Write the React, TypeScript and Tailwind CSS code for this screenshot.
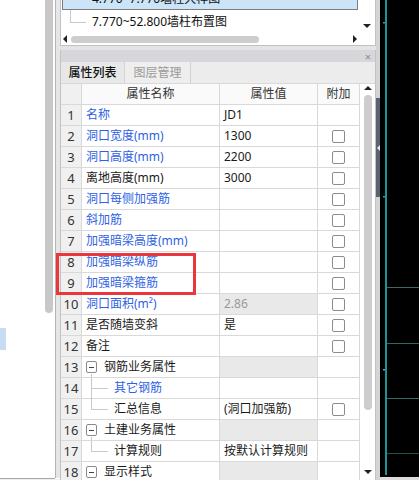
import React from "react";

type Row = {
  n: number;
  name: string;
  blue?: boolean;
  val?: string;
  valMuted?: boolean;
  cb?: boolean;
  valGray?: boolean;
  kind?: "exp" | "child" | "childLast";
};

const rows: Row[] = [
  { n: 1, name: "名称", blue: true, val: "JD1" },
  { n: 2, name: "洞口宽度(mm)", blue: true, val: "1300", cb: true },
  { n: 3, name: "洞口高度(mm)", blue: true, val: "2200", cb: true },
  { n: 4, name: "离地高度(mm)", val: "3000", cb: true },
  { n: 5, name: "洞口每侧加强筋", blue: true, cb: true },
  { n: 6, name: "斜加筋", blue: true, cb: true },
  { n: 7, name: "加强暗梁高度(mm)", blue: true, cb: true },
  { n: 8, name: "加强暗梁纵筋", blue: true, cb: true },
  { n: 9, name: "加强暗梁箍筋", blue: true, cb: true },
  { n: 10, name: "洞口面积(m²)", blue: true, val: "2.86", valMuted: true, valGray: true, cb: true },
  { n: 11, name: "是否随墙变斜", val: "是", cb: true },
  { n: 12, name: "备注", cb: true },
  { n: 13, name: "钢筋业务属性", kind: "exp", valGray: true },
  { n: 14, name: "其它钢筋", blue: true, kind: "child" },
  { n: 15, name: "汇总信息", kind: "childLast", val: "(洞口加强筋)", cb: true },
  { n: 16, name: "土建业务属性", kind: "exp", valGray: true },
  { n: 17, name: "计算规则", kind: "childLast", val: "按默认计算规则" },
  { n: 18, name: "显示样式", kind: "exp", valGray: true },
];

function Checkbox() {
  return <span className="block w-[13px] h-[13px] rounded-[2px] border border-[#8c8c8c] bg-white" />;
}

function NameCell({ r }: { r: Row }) {
  const color = r.blue ? "text-[#2f5fe3]" : "text-[#1a1a1a]";
  if (r.kind === "exp") {
    return (
      <div className="relative w-[138px] h-full border-r border-[#d9d9d9] flex items-center pl-[4px]">
        <span className="flex items-center justify-center w-[11px] h-[12px] border border-[#8a8a8a] rounded-[2px] bg-white">
          <span className="block w-[5px] h-px bg-[#444]" />
        </span>
        {r.n !== 18 && <span className="absolute left-[9px] top-[17px] bottom-0 w-px bg-[#c8c8c8]" />}
        <span className={`ml-[7px] ${color}`}>{r.name}</span>
      </div>
    );
  }
  if (r.kind === "child" || r.kind === "childLast") {
    return (
      <div className="relative w-[138px] h-full border-r border-[#d9d9d9] flex items-center pl-[32px]">
        <span
          className={`absolute left-[9px] top-0 w-px bg-[#c8c8c8] ${r.kind === "child" ? "h-[21px]" : "h-[10px]"}`}
        />
        <span className="absolute left-[9px] top-[10px] w-[17px] h-px bg-[#c8c8c8]" />
        <span className={color}>{r.name}</span>
      </div>
    );
  }
  return (
    <div className="w-[138px] h-full border-r border-[#d9d9d9] flex items-center pl-[4px]">
      <span className={color}>{r.name}</span>
    </div>
  );
}

function TableRow({ r }: { r: Row }) {
  return (
    <div className="flex h-[21px] border-b border-[#d9d9d9] bg-white">
      <div className="w-[21px] h-full border-r border-[#d9d9d9] bg-[#f0f0f0] flex items-center justify-center text-[13px] text-[#333]">
        {r.n}
      </div>
      <NameCell r={r} />
      <div
        className={`w-[98px] h-full border-r border-[#d9d9d9] flex items-center pl-[4px] ${
          r.valGray ? "bg-[#e9e9e9]" : "bg-white"
        } ${r.valMuted ? "text-[#9a9a9a]" : "text-[#1a1a1a]"}`}
      >
        {r.val}
      </div>
      <div className="w-[41px] h-full flex items-center justify-center">{r.cb && <Checkbox />}</div>
    </div>
  );
}

export default function App() {
  return (
    <div
      className="relative flex w-[419px] h-[480px] overflow-hidden bg-white text-[12px] leading-none"
      style={{ fontFamily: '"Noto Sans", "Noto Sans CJK SC", sans-serif' }}
    >
      {/* left strip */}
      <div className="flex flex-col w-[60px] h-full">
        <div className="flex h-[478px]">
          <div className="w-[45px] h-full bg-white pt-[328px]">
            <div className="w-[6px] h-[22px] bg-[#c9dbf0]" />
          </div>
          <div className="w-[8px] h-full bg-white">
            <div className="w-full h-[313px] rounded-b-[4px] bg-[#c8c8c8]" />
          </div>
          <div className="w-[2px] h-full bg-white" />
          <div className="w-px h-full bg-[#b4b4b4]" />
          <div className="w-[4px] h-full bg-[#e6e6e6]" />
        </div>
        <div className="h-px w-[55px] bg-[#a8a8a8]" />
        <div className="h-px w-full bg-[#efefef]" />
      </div>

      {/* main panel */}
      <div className="flex flex-col w-[316px] h-full bg-[#e6e6e6]">
        {/* tree panel */}
        <div className="flex h-[46px] border-l border-r border-b border-[#c2c2c2] bg-white">
          <div className="flex flex-col w-[297px] overflow-hidden">
            <div className="-mt-[12px] ml-px h-[22px] shrink-0 bg-[#cce4f7] border border-[#7d7d7d] flex items-center pl-[29px] text-[#111]">
              4.770~7.770墙柱大样图
            </div>
            <div className="relative h-[23px] shrink-0 flex items-center pl-[31px] text-[#111]">
              <span className="absolute left-[9px] top-0 h-[12px] w-px bg-[#c8c8c8]" />
              <span className="absolute left-[9px] top-[12px] w-[16px] h-px bg-[#c8c8c8]" />
              7.770~52.800墙柱布置图
            </div>
            <div className="h-[12px] shrink-0 flex items-center pl-[2px]">
              <span className="w-0 h-0 border-y-[4px] border-y-transparent border-r-[4px] border-r-[#222]" />
              <span className="ml-[4px] w-[188px] h-[7px] rounded-full bg-[#cdcdcd]" />
              <span className="ml-auto mr-[1px] w-0 h-0 border-y-[4px] border-y-transparent border-l-[4px] border-l-[#222]" />
            </div>
          </div>
          <div className="w-[17px] flex flex-col items-center pt-[24px]">
            <span className="w-0 h-0 border-x-[4px] border-x-transparent border-t-[4px] border-t-[#222]" />
          </div>
        </div>

        <div className="h-[4px] shrink-0 bg-[#e4e4e4]" />

        {/* property panel */}
        <div className="flex flex-col flex-1 border-l border-r border-[#c2c2c2] bg-white">
          <div className="h-[12px] shrink-0 bg-[#d6d6db] flex items-center justify-end pr-[4px]">
            <span className="text-[11px] leading-none text-[#8a8a8a]">×</span>
          </div>
          <div className="h-[21px] shrink-0 flex bg-[#ececec]">
            <div className="w-[63px] h-full flex items-center justify-center text-[#111] font-medium bg-[#e8e8e8]">
              属性列表
            </div>
            <div className="w-[67px] h-full flex items-center justify-center text-[#9a9a9a] bg-[#eeeeee] border-l border-r border-[#d2d2d2]">
              图层管理
            </div>
          </div>
          <div className="flex flex-1 border-t border-[#d9d9d9]">
            <div className="flex flex-col w-[298px]">
              <div className="flex h-[21px] shrink-0 border-b border-[#d9d9d9] bg-[#fafafa] text-[#333]">
                <div className="w-[21px] h-full border-r border-[#d9d9d9] bg-[#f0f0f0]" />
                <div className="w-[138px] h-full border-r border-[#d9d9d9] flex items-center justify-center">属性名称</div>
                <div className="w-[98px] h-full border-r border-[#d9d9d9] flex items-center justify-center">属性值</div>
                <div className="w-[41px] h-full flex items-center justify-center">附加</div>
              </div>
              {rows.map((r) => (
                <TableRow key={r.n} r={r} />
              ))}
            </div>
            <div className="w-[16px] flex flex-col items-center pt-[2px] bg-white border-l border-[#d9d9d9]">
              <span className="w-0 h-0 border-x-[4px] border-x-transparent border-b-[4px] border-b-[#222]" />
              <span className="mt-[5px] w-[8px] h-[315px] rounded-full bg-[#cdcdcd]" />
              <span className="mt-[60px] w-0 h-0 border-x-[4px] border-x-transparent border-t-[4px] border-t-[#222]" />
            </div>
          </div>
        </div>
      </div>

      {/* splitter */}
      <div className="w-[4px] h-full bg-[#d4d4d4] pt-[98px]">
        <div className="w-full h-[99px] bg-[#5a636e] flex items-center justify-center">
          <span className="w-0 h-0 border-y-[3px] border-y-transparent border-r-[3px] border-r-[#e8e8e8]" />
        </div>
      </div>

      {/* canvas */}
      <div className="w-[39px] h-full">
        <svg width="39" height="480" viewBox="0 0 39 480">
          <rect x="0" y="0" width="39" height="477" fill="#000" />
          <rect x="0" y="477" width="39" height="3" fill="#dcdcdc" />
          <rect x="5" y="0" width="2" height="475" fill="#1b9494" />
          <rect x="7" y="287" width="32" height="1" fill="#3c6a68" />
          <rect x="7" y="343" width="32" height="1" fill="#2b6a64" />
          <rect x="7" y="398" width="32" height="1" fill="#2f6e68" />
          <rect x="7" y="453" width="32" height="1" fill="#24534e" />
          <rect x="3" y="22" width="2" height="1.5" fill="#22a8a8" />
          <rect x="3" y="196" width="2" height="1.5" fill="#22a8a8" />
          <rect x="3" y="369" width="2" height="1.5" fill="#4aa8ff" />
        </svg>
      </div>

      {/* red annotation box */}
      <div className="absolute left-[56px] top-[253px] w-[140px] h-[42px] border-[3px] border-[#e8383d]" />
    </div>
  );
}
